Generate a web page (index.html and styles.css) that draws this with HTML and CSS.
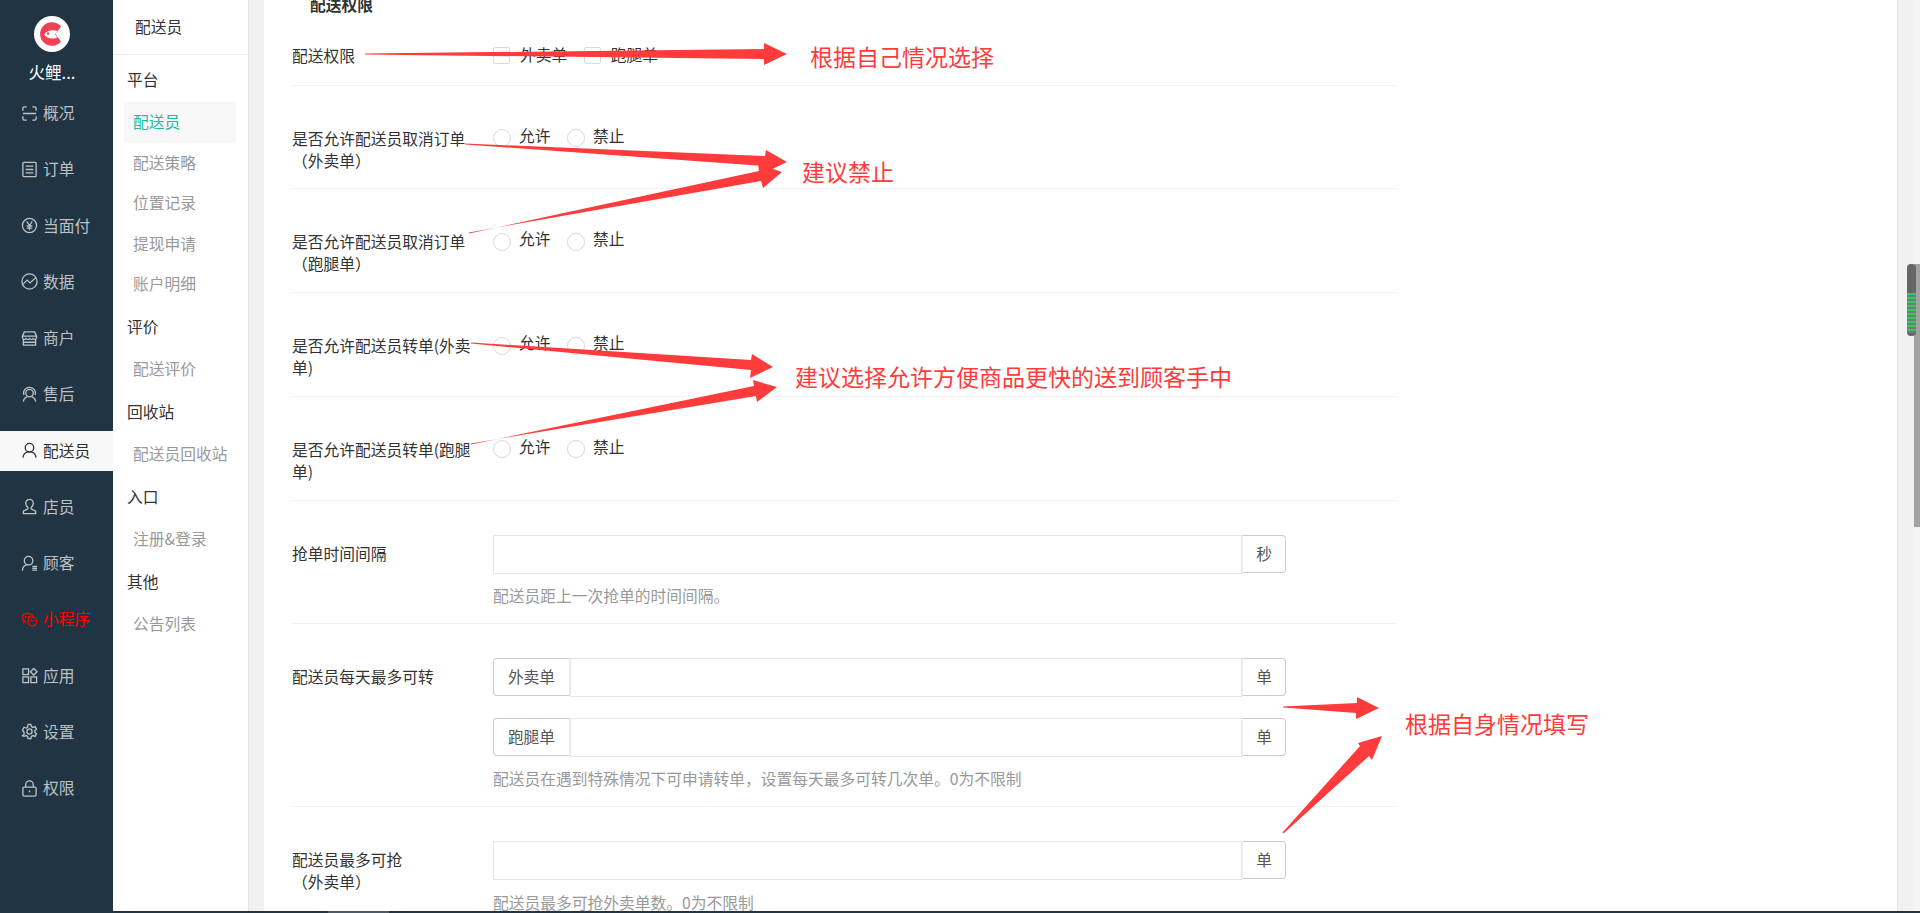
FILE: index.html
```html
<!DOCTYPE html>
<html lang="zh-CN">
<head>
    <meta charset="UTF-8">
    <meta name="viewport" content="width=device-width, initial-scale=1.0">
    <title>配送员设置</title>
    <link rel="stylesheet" href="styles.css">
</head>
<body>

<div class="app">
    <aside class="nav">
        <div class="brand">
            <svg class="brand-logo" viewBox="0 0 36 36">
                <circle cx="18" cy="18" r="18" fill="#fff"/>
                <path d="M27 10.500A11.800 11.800 0 1 0 27 25.500L21.500 18Z" fill="#f43f54"/>
                <path d="M10 18.500C13 14 19 13.500 23.500 15L21 18.500L23.500 21.500C19 23 13 23 10 18.500Z" fill="#fff"/>
                <circle cx="14" cy="17.500" r="1.200" fill="#f43f54"/>
            </svg>
            <div class="brand-name">火鲤...</div>
        </div>
        <ul class="nav-list">
            <li class="nav-item">
                <svg class="icon" viewBox="0 0 18 18"><path d="M2 6V3.500A1.500 1.500 0 0 1 3.500 2H6M12 2h2.500A1.500 1.500 0 0 1 16 3.500V6M2 12v2.500A1.500 1.500 0 0 0 3.500 16H6M12 16h2.500a1.500 1.500 0 0 0 1.500-1.500V12M2 9h14"/></svg>
                概况
            </li>
            <li class="nav-item">
                <svg class="icon" viewBox="0 0 18 18"><rect x="2" y="1.500" width="14" height="15" rx="1"/><path d="M5 5.500h8M5 9h8M5 12.500h8"/></svg>
                订单
            </li>
            <li class="nav-item">
                <svg class="icon" viewBox="0 0 18 18"><circle cx="9" cy="9" r="7.500"/><path d="M6 4.500L9 9l3-4.500M9 9v5M6 9.500h6M6 11.800h6"/></svg>
                当面付
            </li>
            <li class="nav-item">
                <svg class="icon" viewBox="0 0 18 18"><circle cx="9" cy="9" r="8"/><path d="M2.500 11.500L6.500 7.500l3 3L15.500 5"/></svg>
                数据
            </li>
            <li class="nav-item">
                <svg class="icon" viewBox="0 0 18 18"><path d="M3.500 2h11L16.500 6.500v1.500a2 2 0 0 1-3.700 1 2.300 2.300 0 0 1-3.800 0 2.300 2.300 0 0 1-3.800 0A2 2 0 0 1 1.500 8V6.500ZM1.500 6.500h15M2.500 10v6h13v-6M2.500 13h13"/></svg>
                商户
            </li>
            <li class="nav-item">
                <svg class="icon" viewBox="0 0 18 18"><circle cx="9" cy="7.500" r="4"/><path d="M3 9.500A6 6 0 0 1 9 1.500a6 6 0 0 1 6 8M2.500 16.500c.5-3 2-4.500 4-5M15.500 16.500c-.5-3-2-4.500-4-5"/></svg>
                售后
            </li>
            <li class="nav-item nav-item-active">
                <svg class="icon" viewBox="0 0 18 18"><circle cx="9" cy="6" r="4.500"/><path d="M2 16.500c.5-3.500 3-6 7-6s6.500 2.500 7 6"/></svg>
                配送员
            </li>
            <li class="nav-item">
                <svg class="icon" viewBox="0 0 18 18"><path d="M9 1.500a4 4 0 0 1 4 4c0 2-1 3.500-2.200 4.500v1.500l4.700 2.500v2.500h-13V14l4.700-2.500V10C6 9 5 7.500 5 5.500a4 4 0 0 1 4-4Z"/></svg>
                店员
            </li>
            <li class="nav-item">
                <svg class="icon" viewBox="0 0 18 18"><circle cx="8" cy="6" r="4.500"/><path d="M1.500 16.500c.3-3.500 2.500-6 5.500-6M12 12h5M12 14h5M12 16h5"/></svg>
                顾客
            </li>
            <li class="nav-item nav-item-red">
                <svg class="icon" viewBox="0 0 18 18"><path d="M7 2.500c-3 0-5.500 2-5.500 4.500 0 1.300.7 2.500 1.800 3.300L3 12l2-1"/><path d="M7 2.500c2.700 0 5 1.600 5.400 3.800"/><circle cx="12" cy="11" r="4.700"/><path d="M15 14.500l.7 1.500"/><circle cx="5" cy="6.300" r=".5"/><circle cx="8.500" cy="6.300" r=".5"/><circle cx="10.500" cy="10" r=".4"/><circle cx="13.500" cy="10" r=".4"/></svg>
                小程序
            </li>
            <li class="nav-item">
                <svg class="icon" viewBox="0 0 18 18"><rect x="2" y="2" width="6" height="6"/><rect x="2" y="10.500" width="6" height="6"/><rect x="10.500" y="10.500" width="6" height="6"/><path d="M13.500 1.500l3.500 3.500-3.500 3.500L10 5Z"/></svg>
                应用
            </li>
            <li class="nav-item">
                <svg class="icon" viewBox="0 0 18 18"><path d="M7.500 1.500h3l.5 2.300 1.700.9 2.200-.8 1.500 2.600-1.700 1.600v1.800l1.700 1.600-1.500 2.600-2.200-.8-1.700.9-.5 2.300h-3l-.5-2.300-1.700-.9-2.200.8L1.600 13.500l1.700-1.600v-1.800L1.600 7.500l1.500-3 2.200.8 1.700-.9Z"/><circle cx="9" cy="9" r="2.700"/></svg>
                设置
            </li>
            <li class="nav-item">
                <svg class="icon" viewBox="0 0 18 18"><rect x="2" y="7.500" width="14" height="9.500" rx="1.500"/><path d="M5 7.500V5a4 4 0 0 1 8 0v2.500M9 11v2"/></svg>
                权限
            </li>
        </ul>
    </aside>

    <aside class="subnav">
        <div class="subnav-header">配送员</div>
        <div class="subnav-title">平台</div>
        <div class="subnav-item subnav-item-active">配送员</div>
        <div class="subnav-item">配送策略</div>
        <div class="subnav-item">位置记录</div>
        <div class="subnav-item">提现申请</div>
        <div class="subnav-item">账户明细</div>
        <div class="subnav-title">评价</div>
        <div class="subnav-item">配送评价</div>
        <div class="subnav-title">回收站</div>
        <div class="subnav-item">配送员回收站</div>
        <div class="subnav-title">入口</div>
        <div class="subnav-item">注册&amp;登录</div>
        <div class="subnav-title">其他</div>
        <div class="subnav-item">公告列表</div>
    </aside>

    <main class="main">
        <div class="card">
            <div class="form">
                <div class="form-heading">配送权限</div>

                <div class="form-row form-row-first">
                    <div class="form-label">配送权限</div>
                    <div class="form-options">
                        <label class="option"><input type="checkbox" class="check">外卖单</label>
                        <label class="option"><input type="checkbox" class="check">跑腿单</label>
                    </div>
                </div>

                <div class="form-row">
                    <div class="form-label">是否允许配送员取消订单（外卖单）</div>
                    <div class="form-options">
                        <label class="option"><input type="radio" class="radio" name="r1">允许</label>
                        <label class="option"><input type="radio" class="radio" name="r1">禁止</label>
                    </div>
                </div>

                <div class="form-row">
                    <div class="form-label">是否允许配送员取消订单（跑腿单）</div>
                    <div class="form-options">
                        <label class="option"><input type="radio" class="radio" name="r2">允许</label>
                        <label class="option"><input type="radio" class="radio" name="r2">禁止</label>
                    </div>
                </div>

                <div class="form-row">
                    <div class="form-label">是否允许配送员转单(外卖单)</div>
                    <div class="form-options">
                        <label class="option"><input type="radio" class="radio" name="r3">允许</label>
                        <label class="option"><input type="radio" class="radio" name="r3">禁止</label>
                    </div>
                </div>

                <div class="form-row">
                    <div class="form-label">是否允许配送员转单(跑腿单)</div>
                    <div class="form-options">
                        <label class="option"><input type="radio" class="radio" name="r4">允许</label>
                        <label class="option"><input type="radio" class="radio" name="r4">禁止</label>
                    </div>
                </div>

                <div class="form-row form-row-input">
                    <div class="form-label">抢单时间间隔</div>
                    <div class="form-field">
                        <div class="input-group">
                            <input type="text" class="input">
                            <span class="addon">秒</span>
                        </div>
                        <div class="hint">配送员距上一次抢单的时间间隔。</div>
                    </div>
                </div>

                <div class="form-row form-row-input">
                    <div class="form-label">配送员每天最多可转</div>
                    <div class="form-field">
                        <div class="input-group">
                            <span class="addon addon-left">外卖单</span>
                            <input type="text" class="input">
                            <span class="addon">单</span>
                        </div>
                        <div class="input-group">
                            <span class="addon addon-left">跑腿单</span>
                            <input type="text" class="input">
                            <span class="addon">单</span>
                        </div>
                        <div class="hint">配送员在遇到特殊情况下可申请转单，设置每天最多可转几次单。0为不限制</div>
                    </div>
                </div>

                <div class="form-row form-row-input">
                    <div class="form-label">配送员最多可抢<br>（外卖单）</div>
                    <div class="form-field">
                        <div class="input-group">
                            <input type="text" class="input">
                            <span class="addon">单</span>
                        </div>
                        <div class="hint">配送员最多可抢外卖单数。0为不限制</div>
                    </div>
                </div>
            </div>
        </div>
    </main>
</div>
<div class="bottom-bar"><span class="bottom-thumb"></span></div>

<!-- annotations drawn on top of the screenshot -->
<svg class="arrows" viewBox="0 0 1920 913">
    <polygon points="365,53.500 764,49 764,43 787,54 764,65 764,59 365,54.500"/>
    <polygon points="465,143.500 765,156 766,150 787,162 764,173 765,166 465,144.500"/>
    <polygon points="469,232.500 761,181 763,188 782,172 758,164 759,171 469,233.500"/>
    <polygon points="471,342.500 751,360 752,354 773,367 750,378 751,370 471,343.500"/>
    <polygon points="471,443.500 756,396 757,402 777,387 753,380 754,386 471,444.500"/>
    <polygon points="1283,706.500 1357,703 1357,697 1379,708 1356,719 1356,713 1283,707.500"/>
    <polygon points="1282.500,832.500 1360,746 1358,743 1382,736 1372,760 1369,756 1283.500,833.500"/>
</svg>
<span class="note note-1">根据自己情况选择</span>
<span class="note note-2">建议禁止</span>
<span class="note note-3">建议选择允许方便商品更快的送到顾客手中</span>
<span class="note note-4">根据自身情况填写</span>

<div class="scroll-track"></div>
<div class="scroll-thumb"></div>
<div class="phone-thumb"><div class="phone-level"></div></div>

</body>
</html>
```

FILE: styles.css
```css
* {
    box-sizing: border-box;
}

html,
body {
    margin: 0;
    padding: 0;
    height: 913px;
    overflow: hidden;
}

body {
    position: relative;
    font-family: "Noto Sans CJK SC", "Noto Sans", sans-serif;
    font-size: 15.75px;
    line-height: 22px;
    color: #333;
    background-color: #f1f1f1;
}

.app {
    display: flex;
    height: 911px;
    overflow: hidden;
}

.bottom-bar {
    position: relative;
    height: 2px;
    background-color: #203444;
}

.bottom-thumb {
    position: absolute;
    left: 328px;
    top: 0;
    width: 61px;
    height: 2px;
    background-color: #4a5a66;
}

/* dark left nav */
.nav {
    flex: 0 0 113px;
    background-color: #203444;
}

.brand {
    height: 93px;
    padding: 16px 9px 0 0;
    text-align: center;
}

.brand-logo {
    display: block;
    width: 36px;
    height: 36px;
    margin: 0 auto 9px;
}

.brand-name {
    font-size: 16.5px;
    color: #fff;
}

.nav-list {
    display: grid;
    grid-auto-rows: 40px;
    row-gap: 16.25px;
    margin: 0;
    padding: 0;
    list-style: none;
}

.nav-item {
    display: flex;
    align-items: center;
    gap: 5px;
    padding-left: 21px;
    color: #bcc2c6;
}

.nav-item-active {
    background-color: #f8f8f8;
    color: #333;
}

.nav-item-red {
    color: #f00;
}

.icon {
    flex: 0 0 17px;
    width: 17px;
    height: 17px;
    fill: none;
    stroke: currentColor;
    stroke-width: 1.4;
}

/* second column */
.subnav {
    flex: 0 0 136px;
    background-color: #fff;
    border-right: 1px solid #e8e8e8;
}

.subnav-header {
    height: 55px;
    margin-bottom: 2.75px;
    padding-left: 22px;
    line-height: 53px;
    border-bottom: 1px solid #eee;
}

.subnav-title {
    height: 44.5px;
    padding-left: 14px;
    line-height: 44.5px;
}

.subnav-item {
    height: 40.5px;
    margin: 0 12px 0 11px;
    padding-left: 9px;
    line-height: 40.5px;
    color: #999;
    border-radius: 2px;
}

.subnav-item-active {
    background-color: #f8f8f8;
    color: #1abc9c;
}

/* main panel */
.main {
    flex: 1;
    padding-left: 15px;
    background-color: #f1f1f1;
}

.card {
    display: flow-root;
    width: 1634px;
    height: 100%;
    padding-left: 28px;
    background-color: #fff;
    border-right: 1px solid #e4e4e4;
}

.form {
    width: 1104px;
}

.form-heading {
    margin-top: -6px;
    padding-left: 18px;
    font-weight: 700;
}

.form-row {
    display: flex;
    padding: 42px 0 16.75px;
    border-bottom: 1px solid #f1f3f3;
}

.form-row-first {
    padding-top: 29px;
    padding-bottom: 15.500px;
}

.form-row-first .form-options {
    margin-top: 2px;
}

.form-row-input {
    padding-top: 34px;
    padding-bottom: 16px;
}

.form-row-input:last-child {
    border-bottom: none;
}

.form-label {
    flex: 0 0 185px;
    margin-right: 16px;
}

.form-row-input .form-label {
    padding-top: 8px;
}

.form-options {
    display: flex;
    gap: 16.5px;
    height: 22px;
}

.option {
    display: flex;
    align-items: center;
    gap: 8px;
    margin-top: -3px;
    height: 22px;
}

.check,
.radio {
    flex: none;
    appearance: none;
    margin: 0;
    background-color: #fff;
    border: 1px solid #d9d9d9;
}

.check {
    width: 17px;
    height: 17px;
    margin-right: 2px;
    border-radius: 2px;
}

.radio {
    width: 18px;
    height: 18px;
    margin-top: 5px;
    border-radius: 50%;
}

.form-field {
    width: 793px;
}

.input-group {
    display: flex;
    height: 39px;
}

.input-group + .input-group {
    margin-top: 20.5px;
}

.input {
    flex: 1;
    min-width: 0;
    height: 39px;
    padding: 0 10px;
    background-color: #fff;
    border: 1px solid #e5e6e7;
    outline: none;
}

.addon {
    flex: 0 0 44px;
    height: 38px;
    line-height: 36px;
    text-align: center;
    color: #555;
    background-color: #fff;
    border: 1px solid #ccc;
    border-left-color: #eee;
    border-radius: 0 4px 4px 0;
}

.addon-left {
    flex-basis: 77px;
    border-left-color: #ccc;
    border-right-color: #eee;
    border-radius: 4px 0 0 4px;
}

.hint {
    margin-top: 11.5px;
    color: #999;
}

/* red notes that were painted over the screenshot */
.arrows {
    position: absolute;
    left: 0;
    top: 0;
    width: 1920px;
    height: 913px;
    fill: #ff3b3b;
    pointer-events: none;
}

.note {
    position: absolute;
    font-size: 23px;
    line-height: 30px;
    white-space: nowrap;
    color: #ff3b3b;
}

.note-1 {
    left: 810px;
    top: 41px;
}

.note-2 {
    left: 802px;
    top: 156px;
}

.note-3 {
    left: 795px;
    top: 361px;
}

.note-4 {
    left: 1405px;
    top: 708px;
}

/* browser scrollbar and floating widget on the right */
.scroll-track {
    position: absolute;
    left: 1914px;
    top: 0;
    width: 6px;
    height: 911px;
    background-color: #f4f4f4;
}

.scroll-thumb {
    position: absolute;
    left: 1914px;
    top: 264px;
    width: 6px;
    height: 263px;
    background-color: #a3a3a3;
}

.phone-thumb {
    position: absolute;
    left: 1907px;
    top: 264px;
    width: 9px;
    height: 72px;
    padding-top: 29px;
    background-color: #666;
    border-radius: 4px;
}

.phone-level {
    height: 40px;
    background: repeating-linear-gradient(#2ecc5f 0, #2ecc5f 2px, #6d7f70 2px, #6d7f70 4px);
    border-radius: 0 0 3px 3px;
}
```
